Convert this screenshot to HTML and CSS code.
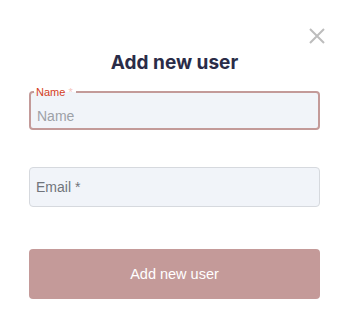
FILE: index.html
```html
<!DOCTYPE html>
<html lang="en">
<head>
    <meta charset="UTF-8">
    <meta name="viewport" content="width=device-width, initial-scale=1.0">
    <title>Add new user</title>
    <link rel="stylesheet" href="styles.css">
</head>
<body>
    <div class="dialog">
        <button class="close" aria-label="Close">
            <svg width="16" height="16" viewBox="0 0 16 16">
                <path d="M1 1 L15 15 M15 1 L1 15" stroke="#bdbdbd" stroke-width="2" fill="none"/>
            </svg>
        </button>

        <h2 class="title">Add new user</h2>

        <div class="field active">
            <label class="field-label" for="name">Name <span class="req">*</span></label>
            <input type="text" id="name" placeholder="Name" autofocus>
        </div>

        <div class="field">
            <input type="email" id="email" placeholder="Email *">
        </div>

        <button class="submit">Add new user</button>
    </div>
</body>
</html>
```

FILE: styles.css
```css
body {
    margin: 0;
    background: white;
    font-family: "Liberation Sans", Arial, sans-serif;
}
.dialog {
    position: relative;
    padding: 51px 29px 0 29px;
    display: flex;
    flex-direction: column;
}
.close {
    position: absolute;
    top: 28px;
    right: 24px;
    background: none;
    border: none;
    padding: 0;
    width: 16px;
    height: 16px;
    cursor: pointer;
}
.close svg {
    display: block;
}
.title {
    margin: 0 0 16px 0;
    text-align: center;
    font-family: Inter, "Open Sans", sans-serif;
    font-weight: 700;
    font-size: 19px;
    line-height: 24px;
    color: #2a2c48;
}
.field {
    position: relative;
    height: 40px;
    box-sizing: border-box;
    border: 1px solid #d6d9de;
    border-radius: 4px;
    background-color: #f1f4f9;
    margin-bottom: 37px;
}
.field.active {
    height: 39px;
    border: 2px solid #c39a99;
}
.field input {
    width: 100%;
    height: 100%;
    box-sizing: border-box;
    border: none;
    outline: none;
    background: transparent;
    padding: 0 6px;
    font-family: "Liberation Sans", Arial, sans-serif;
    font-size: 14px;
    color: #333;
    caret-color: #c62f0e;
}
.field.active input {
    padding-top: 10px;
}
.field input::placeholder {
    color: #70747b;
}
.field.active input::placeholder {
    color: #9da1a7;
}
.field-label {
    position: absolute;
    top: -8px;
    left: 3px;
    padding: 0 3px 0 2px;
    font-size: 11px;
    line-height: 14px;
    color: #d4401d;
    background: linear-gradient(white 50%, #f1f4f9 50%);
}
.field-label .req {
    color: #f6c6bd;
}
.submit {
    margin-top: 5px;
    height: 50px;
    border: none;
    border-radius: 4px;
    background-color: #c49a99;
    color: white;
    font-family: "Liberation Sans", Arial, sans-serif;
    font-size: 14.5px;
    cursor: pointer;
}
```
